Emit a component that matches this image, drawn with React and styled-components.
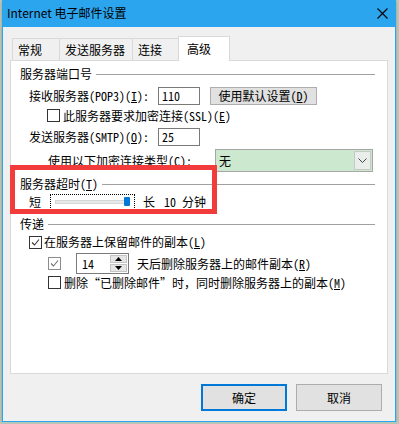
import React from 'react'
import styled, { createGlobalStyle } from 'styled-components'

const GlobalStyle = createGlobalStyle`
  html, body {
    margin: 0;
    padding: 0;
    background: #b9c6b7;
  }
  body {
    font-family: "Noto Sans Mono CJK SC", "Noto Sans CJK SC", sans-serif;
    font-size: 12px;
    color: #000;
  }
  u { text-decoration-thickness: 1px; text-underline-offset: 1px; }
`

const Window = styled.div`
  box-sizing: border-box;
  width: 394px;
  height: 422px;
  margin-left: 2px;
  border: 1px solid #2ca5ef;
  border-top: 0;
  background: #f0f0f0;
  display: flex;
  flex-direction: column;
  box-shadow: 0 2px 2px rgba(0, 0, 0, 0.25);
`

const TitleBar = styled.div`
  height: 26px;
  flex: none;
  background: #2ca5ef;
  display: flex;
  align-items: center;
  justify-content: space-between;
  padding: 0 7px 1px 4px;
  font-family: "Noto Sans CJK SC", sans-serif;
  font-size: 12px;
  line-height: 14px;
`

const Body = styled.div`
  padding: 9px 7px 0 7px;
  display: flex;
  flex-direction: column;
`

const TabStrip = styled.div`
  display: flex;
  align-items: flex-end;
  height: 24px;
  padding-left: 2px;
  position: relative;
  z-index: 1;
`

const Tab = styled.div`
  box-sizing: border-box;
  width: ${p => p.$w}px;
  height: ${p => (p.$active ? 25 : 22)}px;
  margin-right: -1px;
  margin-bottom: ${p => (p.$active ? -1 : 0)}px;
  padding-left: ${p => (p.$active ? 8 : 5)}px;
  padding-bottom: ${p => (p.$active ? 1 : 0)}px;
  border: 1px solid #d9d9d9;
  border-bottom: 0;
  background: ${p => (p.$active ? '#fff' : '#f0f0f0')};
  display: flex;
  align-items: center;
  line-height: 14px;
  position: relative;
  z-index: ${p => (p.$active ? 2 : 1)};
`

const Panel = styled.div`
  box-sizing: border-box;
  height: 314px;
  border: 1px solid #d9d9d9;
  background: #fff;
  padding: 6px 12px 0 9px;
  position: relative;
  display: flex;
  flex-direction: column;
`

const GroupTitle = styled.div`
  display: flex;
  align-items: center;
  height: 14px;
  line-height: 14px;
  margin-top: ${p => p.$mt || 0}px;

  &::after {
    content: '';
    flex: 1;
    height: 1px;
    background: #a0a0a0;
    margin-left: 4px;
  }
`

const Row = styled.div`
  display: flex;
  align-items: center;
  height: ${p => p.$h}px;
  margin-top: ${p => p.$mt}px;
  padding-left: ${p => p.$indent}px;
  line-height: 14px;
  white-space: nowrap;
`

const Label = styled.span`
  width: ${p => p.$w}px;
  flex: none;
`

const TextBox = styled.div`
  box-sizing: border-box;
  width: ${p => p.$w}px;
  height: 18px;
  border: 1px solid #7a7a7a;
  background: #fff;
  padding-left: 3px;
  display: flex;
  align-items: center;
`

const PlainButton = styled.div`
  box-sizing: border-box;
  width: 107px;
  height: 18px;
  margin-left: 10px;
  border: 1px solid #adadad;
  background: #e1e1e1;
  display: flex;
  align-items: center;
  justify-content: center;
`

const Box = styled.span`
  box-sizing: border-box;
  width: 13px;
  height: 13px;
  flex: none;
  border: 1px solid ${p => (p.$muted ? '#8c8c8c' : '#333')};
  background: #fff;
  display: flex;
  align-items: center;
  justify-content: center;
  margin-right: ${p => p.$gap ?? 3}px;
`

const Select = styled.div`
  box-sizing: border-box;
  width: 158px;
  height: 23px;
  border: 1px solid #a6a6a6;
  background: #cce8cf;
  display: flex;
  align-items: center;
  justify-content: space-between;
  padding: 0 1px 0 3px;
`

const DropButton = styled.div`
  box-sizing: border-box;
  width: 17px;
  height: 19px;
  border: 1px solid #c8c8c8;
  background: #e9eeea;
  display: flex;
  align-items: center;
  justify-content: center;
`

const Slider = styled.div`
  box-sizing: border-box;
  width: 85px;
  height: 16px;
  margin: 0 8px 0 9px;
  border: 1px dotted #000;
  position: relative;
  display: flex;
  align-items: center;
  padding-left: 4px;
`

const Track = styled.div`
  box-sizing: border-box;
  width: 71px;
  height: 4px;
  background: #e7eaea;
  border: 1px solid #d6d6d6;
`

const Thumb = styled.div`
  position: absolute;
  left: 73px;
  top: 2px;
  width: 6px;
  height: 9px;
  border-radius: 1px;
  background: #0078d7;
`

const Gap = styled.span`
  display: inline-block;
  width: ${p => p.$w}px;
`

const Spinner = styled.div`
  box-sizing: border-box;
  width: 53px;
  height: 21px;
  margin: 0 8px 0 15px;
  border: 1px solid #7a7a7a;
  background: #fff;
  display: flex;
  align-items: stretch;
  justify-content: space-between;
  padding: 1px;
`

const SpinValue = styled.span`
  display: flex;
  align-items: center;
  padding-left: 4px;
`

const SpinButtons = styled.div`
  width: 17px;
  display: flex;
  flex-direction: column;
  gap: 1px;
`

const SpinButton = styled.div`
  flex: 1;
  background: #e6e6e6;
  border: 1px solid #c4c4c4;
  display: flex;
  align-items: center;
  justify-content: center;
`

const Annotation = styled.div`
  position: absolute;
  left: -1px;
  top: 104px;
  box-sizing: border-box;
  width: 207px;
  height: 49px;
  border: 5px solid #f23b3b;
  pointer-events: none;
`

const Footer = styled.div`
  display: flex;
  justify-content: flex-end;
  gap: 9px;
  margin-top: 10px;
  padding-right: 6px;
`

const DialogButton = styled.div`
  box-sizing: border-box;
  width: 86px;
  height: 27px;
  border: ${p => (p.$default ? '2px solid #0078d7' : '1px solid #adadad')};
  background: #e1e1e1;
  display: flex;
  align-items: center;
  justify-content: center;
  font-family: "Noto Sans CJK SC", sans-serif;
  font-size: 12px;
`

const Check = ({ color = '#333' }) => (
  <svg width="9" height="9" viewBox="0 0 9 9">
    <path d="M1 4.5 L3.5 7 L8 1.5" fill="none" stroke={color} strokeWidth="1.1" />
  </svg>
)

const Checkbox = ({ checked, muted, gap }) => (
  <Box $muted={muted} $gap={gap}>
    {checked && <Check color={muted ? '#6f6f6f' : '#333'} />}
  </Box>
)

export default function App() {
  return (
    <>
      <GlobalStyle />
      <Window>
        <TitleBar>
          <span>Internet 电子邮件设置</span>
          <svg width="11" height="11" viewBox="0 0 11 11">
            <path d="M0.5 0.5 L10.5 10.5 M10.5 0.5 L0.5 10.5" stroke="#000" strokeWidth="1.1" />
          </svg>
        </TitleBar>
        <Body>
          <TabStrip>
            <Tab $w={48}>常规</Tab>
            <Tab $w={74}>发送服务器</Tab>
            <Tab $w={47}>连接</Tab>
            <Tab $w={52} $active>高级</Tab>
          </TabStrip>
          <Panel>
            <GroupTitle>服务器端口号</GroupTitle>
            <Row $h={20} $mt={5} $indent={9}>
              <Label $w={129}>接收服务器(POP3)(<u>I</u>):</Label>
              <TextBox $w={42}>110</TextBox>
              <PlainButton>使用默认设置(<u>D</u>)</PlainButton>
            </Row>
            <Row $h={13} $mt={3} $indent={27}>
              <Checkbox />
              此服务器要求加密连接(SSL)(<u>E</u>)
            </Row>
            <Row $h={20} $mt={5} $indent={9}>
              <Label $w={129}>发送服务器(SMTP)(<u>O</u>):</Label>
              <TextBox $w={42}>25</TextBox>
            </Row>
            <Row $h={23} $mt={2} $indent={28}>
              <Label $w={167}>使用以下加密连接类型(<u>C</u>):</Label>
              <Select>
                <span>无</span>
                <DropButton>
                  <svg width="9" height="5" viewBox="0 0 9 5">
                    <path d="M0.5 0.5 L4.5 4.5 L8.5 0.5" fill="none" stroke="#444" strokeWidth="1" />
                  </svg>
                </DropButton>
              </Select>
            </Row>
            <GroupTitle $mt={5}>服务器超时(<u>T</u>)</GroupTitle>
            <Row $h={16} $mt={3} $indent={9}>
              <span>短</span>
              <Slider>
                <Track />
                <Thumb />
              </Slider>
              <span>长</span>
              <Gap $w={9} />
              <span>10</span>
              <Gap $w={6} />
              <span>分钟</span>
            </Row>
            <GroupTitle $mt={7}>传递</GroupTitle>
            <Row $h={14} $mt={4} $indent={9}>
              <Checkbox checked gap={2} />
              在服务器上保留邮件的副本(<u>L</u>)
            </Row>
            <Row $h={21} $mt={4} $indent={28}>
              <Checkbox checked muted gap={0} />
              <Spinner>
                <SpinValue>14</SpinValue>
                <SpinButtons>
                  <SpinButton>
                    <svg width="7" height="4" viewBox="0 0 7 4"><path d="M0 4 L3.5 0 L7 4 Z" fill="#000" /></svg>
                  </SpinButton>
                  <SpinButton>
                    <svg width="7" height="4" viewBox="0 0 7 4"><path d="M0 0 L3.5 4 L7 0 Z" fill="#000" /></svg>
                  </SpinButton>
                </SpinButtons>
              </Spinner>
              天后删除服务器上的邮件副本(<u>R</u>)
            </Row>
            <Row $h={13} $mt={2} $indent={28}>
              <Checkbox />
              删除“已删除邮件”时，同时删除服务器上的副本(<u>M</u>)
            </Row>
            <Annotation />
          </Panel>
          <Footer>
            <DialogButton $default>确定</DialogButton>
            <DialogButton>取消</DialogButton>
          </Footer>
        </Body>
      </Window>
    </>
  )
}
